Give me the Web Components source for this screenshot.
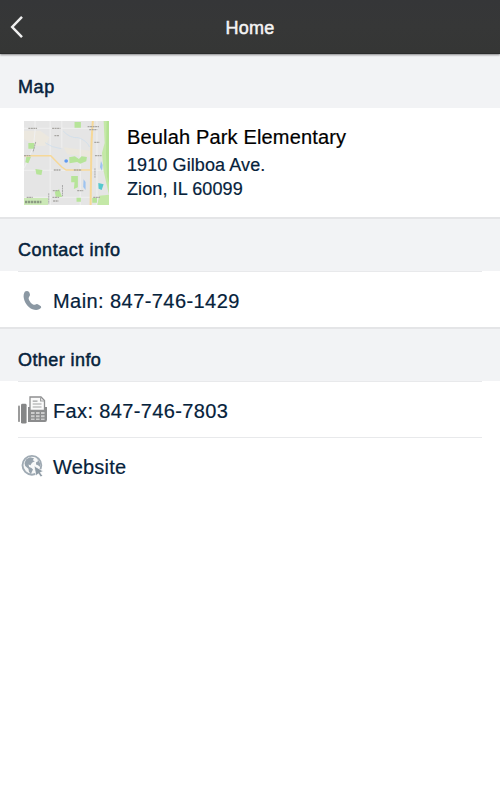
<!DOCTYPE html>
<html lang="en">
<head>
<meta charset="utf-8">
<title>Home</title>
<style>
html, body { margin: 0; height: 100%; background: #fff; }
body { font-family: "Liberation Sans", Arial, sans-serif; color: #06223b; overflow: hidden; }
</style>
</head>
<body>
<school-page></school-page>

<template id="t-nav">
<style>
:host { display: grid; grid-template-columns: 34px 1fr 34px; align-items: center; height: 54px; box-sizing: border-box; background: linear-gradient(#353638, #363737 50%, #353635); color: #fff; box-shadow: 0 1px 2px rgba(0,0,0,.45); position: relative; border-bottom: 1px solid #2b2c2c; }
svg { display: block; margin-left: 9px; margin-top: 1px; }
.title { text-align: center; font-size: 18px; line-height: 22px; letter-spacing: .2px; -webkit-text-stroke: .5px #f4f4f4; padding-top: 2px; color: #f4f4f4; }
</style>
<svg width="16" height="24" viewBox="0 0 16 24"><path d="M13 1.8 3.2 12 13 22.2" fill="none" stroke="#f0f0f0" stroke-width="2.5"/></svg>
<div class="title"><slot></slot></div>
</template>

<template id="t-head">
<style>
:host { display: block; box-sizing: border-box; height: 54px; padding: 22px 18px 0; background: #f2f3f5; }
:host([ruled]) { border-top: 2px solid #e4e5e7; padding-top: 20px; }
span { display: inline-block; font-size: 18px; line-height: 22px; letter-spacing: var(--track, 0); -webkit-text-stroke: .5px currentColor; }
</style>
<span><slot></slot></span>
</template>

<template id="t-row">
<style>
:host { display: block; height: 56px; padding: 0 18px; box-sizing: border-box; }
.line { display: flex; align-items: center; height: 100%; box-sizing: border-box; border-top: 1.5px solid #e8e9eb; }
.icon { width: 30px; height: 30px; margin-right: 5px; }
.label { font-size: 20px; line-height: 26px; letter-spacing: var(--track, 0); -webkit-text-stroke: .2px currentColor; padding-top: 2px; }
</style>
<div class="line"><div class="icon"><slot name="icon"></slot></div><div class="label"><slot></slot></div></div>
</template>

<template id="t-phone">
<style>:host, svg { display: block; }</style>
<svg width="30" height="30" viewBox="0 0 30 30"><path d="M7.6 6.2Q10.5 5.2 11.5 7.7Q12.8 10.5 11.2 11.7Q10 12.7 11 15Q12.5 18.2 15 19.5Q16.4 20.2 17.5 19.5Q18.8 18.5 21 19.9Q23.8 21.3 23.2 22.6C21 26 15 25.6 11.1 22.3C6.8 18.5 4.4 11.9 6.2 7.9Q6.7 6.5 7.6 6.2Z" fill="#8b98a3"/></svg>
</template>

<template id="t-fax">
<style>:host, svg { display: block; }</style>
<svg width="30" height="30" viewBox="0 0 30 30">
<rect x="0" y="10.5" width="2" height="16.5" rx=".8" fill="#9b9b9b"/>
<rect x="3" y="8.8" width="5.6" height="19.8" rx="1.4" fill="#858687"/>
<path d="M10 12h19v12.5q0 2.5-2 2.5H10Z" fill="#8b8c8d"/>
<path d="M12 2h11l3.5 3.5v10H12Z" fill="#fafafa" stroke="#8e8f90" stroke-width="1.3"/>
<path d="M22.6 2.2v3.8h3.8M14.7 6.2h4.8M14.7 9h8.8M14.7 12h8.8" fill="none" stroke="#a0a1a2" stroke-width="1.2"/>
<path d="M13 17h3.6v2.1H13ZM18 17h3.6v2.1H18ZM23 17h3.6v2.1H23ZM13 20.3h3.6v2H13ZM18 20.3h3.6v2H18ZM23 20.3h3.6v2H23ZM13 23.5h3.6v1.6H13ZM18 23.5h3.6v1.6H18ZM23 23.5h3.6v1.6H23Z" fill="#ccc"/>
</svg>
</template>

<template id="t-web">
<style>:host, svg { display: block; }</style>
<svg width="30" height="30" viewBox="0 0 30 30">
<circle cx="13.9" cy="14.3" r="9.4" fill="#f7f8f8" stroke="#a0abb4" stroke-width="1.9"/>
<path d="M8.2 8.2 12 6.2 16 7.3 14.8 9.2 16.8 10.2 14 11.7 12.5 14.2 10.5 13.5 11.2 16 13.5 17 15 18.6 13.7 21.2 13 23.3 11 20.7 10.4 17.7 7.2 15 6.5 12ZM19.3 7.6 22 12 22.2 16 20 14.2 18 13.5 18.1 11.2 20 10.2Z" fill="#97a3ad"/>
<path d="M16 14.8 25.3 20.3 22.3 21.5 24.6 24.8 22.7 26 20.4 22.7 18 24.8Z" fill="#8d9aa4" stroke="#fff" stroke-width=".7"/>
</svg>
</template>

<template id="t-map">
<style>:host, svg { display: block; }</style>
<svg width="85" height="84" viewBox="27 33 254 252" preserveAspectRatio="none">
<defs><filter id="soft" x="-5%" y="-5%" width="110%" height="110%" color-interpolation-filters="sRGB"><feGaussianBlur stdDeviation="2.2"/></filter></defs>
<rect x="27" y="33" width="254" height="252" fill="#e5e5e5"/>
<g filter="url(#soft)">
<path d="M27 62h48l28 20-12 25H60l-33-20Z" fill="#ece8df"/>
<path d="M145 112l80 10v20l-68-9Z" fill="#ebe7dd"/>
<path d="M27 55h220M27 181h250M27 262h235M60 33v30L55 112 27 175M105 33v252M140 33v80M195 85v200M245 33v252" fill="none" stroke="#f0f0f0" stroke-width="3"/>
<path d="M265 33h20v256h-40l7-32 29-3-16-70-5-55 8-30Z" fill="#c4e8a7"/>
<path d="M274 33h7v187l-6-20-3-70Z" fill="#b4e294"/>
<path d="M178 36h19v17h-19ZM40 99h18v17H40ZM34 140h14l-8 20-9-3ZM61 177l21 3-3 15-15-2ZM168 198h20v34l-12 5 2-20h-10ZM162 142l17-3 12 8 8-8 16 2-2 13-18 7-9-5-23 4ZM119 245l13-7 9 23-19-1ZM184 263h13v12h-13ZM231 263h14v15h-14Z" fill="#b6e499"/>
<path d="M23 264h76v25H23Z" fill="#cbe8b6"/>
<path d="M144 63q20 22 45 20 25 8 34 28M90 98q20 15 48 18" fill="none" stroke="#cbdced" stroke-width="2"/>
<path d="M23 137h84q17 18 33 34l13 9h74" fill="none" stroke="#f6d898" stroke-width="4.5"/>
<path d="M233 29q-5 69-5 104l-2 156" fill="none" stroke="#f6d898" stroke-width="6"/>
<circle cx="153" cy="153" r="5.5" fill="#5f9af2"/>
<path d="M249 219l16 4-6 17-9-4Z" fill="#55c8ce"/>
<path d="M205 208l6 8v24l-7-9ZM257 153l5 12-2 17-6-10Z" fill="#9dc3f0"/>
<path d="M217 50h34M222 59h24M40 55h26M111 55h25M118 77h15M27 137h19M116 180h20M176 180h23M237 97h16M239 137h20M186 242h18M113 242h18M112 262h20M234 262h20M35 262h18M114 273h16" stroke="#a8a6a2" stroke-width="4" stroke-dasharray="6 1.5"/>
<path d="M142 225v34M101 250v31M239 175v30M62 96l-8 30" stroke="#aaa" stroke-width="3" stroke-dasharray="6 1.5"/>
<path d="M30 276h49" stroke="#8b9a82" stroke-width="7" stroke-dasharray="7 2"/>
</g></svg>
</template>

<template id="t-address">
<style>
:host { display: flex; height: 109px; box-sizing: border-box; padding: 13px 18px 0 24px; background: #fff; }
.text { margin-left: 18px; padding-top: 3px; -webkit-text-stroke: .2px currentColor; }
.name { color: #000; font-size: 20px; line-height: 26px; letter-spacing: .16px; margin-bottom: 3px; }
.lines { font-size: 18px; line-height: 24px; letter-spacing: .1px; }
</style>
<slot name="picture"></slot>
<div class="text"><div class="name"><slot name="name"></slot></div><div class="lines"><slot></slot></div></div>
</template>

<template id="t-page">
<style>
:host { display: flex; flex-direction: column; height: 100vh; background: #fff; }
.map { --track: .6px; }
.contact { --track: .55px; }
.other { --track: .42px; }
.main { --track: .43px; }
.fax { --track: .36px; }
.web { --track: .2px; }
</style>
<nav-bar>Home</nav-bar>
<section-heading class="map">Map</section-heading>
<address-card><area-map slot="picture"></area-map><span slot="name">Beulah Park Elementary</span><div>1910 Gilboa Ave.</div><div>Zion, IL 60099</div></address-card>
<section-heading ruled class="contact">Contact info</section-heading>
<info-row class="main"><phone-icon slot="icon"></phone-icon>Main: 847-746-1429</info-row>
<section-heading ruled class="other">Other info</section-heading>
<info-row class="fax"><fax-icon slot="icon"></fax-icon>Fax: 847-746-7803</info-row>
<info-row class="web"><web-icon slot="icon"></web-icon>Website</info-row>
</template>

<script>
const define = (name, templateId) => customElements.define(name, class extends HTMLElement {
  constructor() {
    super();
    this.attachShadow({ mode: "open" }).append(document.getElementById(templateId).content.cloneNode(true));
  }
});
define("nav-bar", "t-nav");
define("section-heading", "t-head");
define("info-row", "t-row");
define("phone-icon", "t-phone");
define("fax-icon", "t-fax");
define("web-icon", "t-web");
define("area-map", "t-map");
define("address-card", "t-address");
define("school-page", "t-page");
</script>
</body>
</html>
